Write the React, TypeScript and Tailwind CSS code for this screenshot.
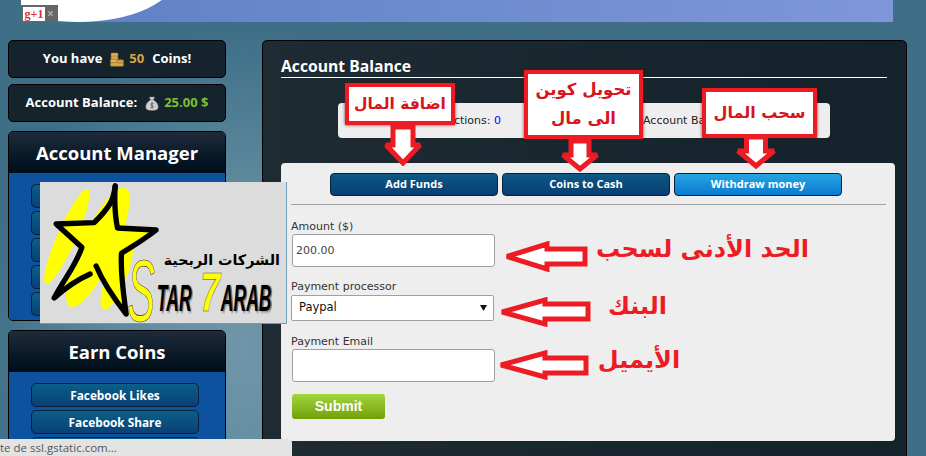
import React from "react";

const AR = { fontFamily: '"DejaVu Sans", sans-serif' };

function CoinStack() {
  return (
    <svg width="14" height="15" viewBox="0 0 14 15" className="ml-[8px] mr-[5px]">
      <rect x="1" y="1" width="7" height="3.5" rx="1" fill="#e0b25a" stroke="#9c7428" strokeWidth="0.6" />
      <rect x="1" y="4" width="7" height="3.5" rx="1" fill="#d9a94e" stroke="#9c7428" strokeWidth="0.6" />
      <rect x="0.5" y="7.2" width="7" height="3.5" rx="1" fill="#e0b25a" stroke="#9c7428" strokeWidth="0.6" />
      <rect x="0.5" y="10.6" width="13" height="3.6" rx="1" fill="#d9a94e" stroke="#9c7428" strokeWidth="0.6" />
      <rect x="7" y="7.8" width="6.5" height="3.2" rx="1" fill="#cf9c42" stroke="#9c7428" strokeWidth="0.6" />
    </svg>
  );
}

function MoneyBag() {
  return (
    <svg width="14" height="15" viewBox="0 0 14 15" className="ml-[8px] mr-[5px]">
      <path d="M4.5 1 L9.5 1 L8.5 4 L5.5 4 Z" fill="#d8d8d8" stroke="#777" strokeWidth="0.5" />
      <path d="M5.5 4 C2 6 0.5 9 0.8 11.5 C1 13.8 3 14.5 7 14.5 C11 14.5 13 13.8 13.2 11.5 C13.5 9 12 6 8.5 4 Z" fill="#cfcfcf" stroke="#777" strokeWidth="0.5" />
      <path d="M8.6 7.6 C7.6 6.9 5.6 7.1 5.7 8.4 C5.8 9.7 8.5 9.3 8.5 10.7 C8.5 11.8 6.4 11.9 5.4 11.2 M7 6.3 L7 12.6" fill="none" stroke="#555" strokeWidth="0.8" />
    </svg>
  );
}

function SideBtn({ label }: { label?: string }) {
  return (
    <div className="h-[24px] w-[168px] shrink-0 rounded-[5px] border border-[#08203a] bg-gradient-to-b from-[#0b5f88] to-[#0a4076] flex items-center justify-center text-white font-bold text-[11.8px] pt-[1px]">
      {label}
    </div>
  );
}

function Panel({ title, height, children }: { title: string; height: string; children: React.ReactNode }) {
  return (
    <div className={`${height} rounded-[5px] border border-black overflow-hidden flex flex-col`}>
      <div className="h-[41px] shrink-0 bg-gradient-to-b from-[#1f2b3b] to-[#000d1a] flex items-center justify-center text-white font-bold text-[18.5px]">
        {title}
      </div>
      <div className="flex-1 bg-[#0c529f] flex flex-col items-center gap-[3px] pt-[11px] pr-[4px]">{children}</div>
    </div>
  );
}

function TabBtn({ label, active }: { label: string; active?: boolean }) {
  return (
    <div className={`h-[23px] w-[168px] rounded-[4px] border border-[#0a2038] flex items-center justify-center text-white font-bold text-[11px] bg-gradient-to-b ${active ? "from-[#27a5e2] to-[#0a7ad2]" : "from-[#0b5a86] to-[#0a3d72]"}`}>
      {label}
    </div>
  );
}

function DownArrow({ x, y, w, h, shaft, neck }: { x: number; y: number; w: number; h: number; shaft: number; neck: number }) {
  const l = (w - shaft) / 2;
  const r = l + shaft;
  return (
    <svg className="absolute" style={{ left: x, top: y }} width={w} height={h}>
      <polygon
        points={`${l},2 ${r},2 ${r},${neck} ${w - 2},${neck} ${w / 2},${h - 3} 2,${neck} ${l},${neck}`}
        fill="#ffffff"
        stroke="#ed1c24"
        strokeWidth="5"
        strokeLinejoin="miter"
        strokeMiterlimit="2"
      />
    </svg>
  );
}

function LeftArrow({ x, y, w, h, head, top, bottom }: { x: number; y: number; w: number; h: number; head: number; top: number; bottom: number }) {
  const m = h / 2;
  return (
    <svg className="absolute" style={{ left: x, top: y }} width={w} height={h}>
      <polygon
        points={`5,${m} ${head},3 ${head},${top} ${w - 3},${top} ${w - 3},${bottom} ${head},${bottom} ${head},${h - 3}`}
        fill="#ffffff"
        stroke="#ed1c24"
        strokeWidth="5"
        strokeLinejoin="miter"
        strokeMiterlimit="3"
      />
    </svg>
  );
}

function Note({ x, y, w, h, size, children }: { x: number; y: number; w: number; h: number; size: number; children: React.ReactNode }) {
  return (
    <div
      dir="rtl"
      className="absolute bg-white border-[4px] border-[#ed1c24] shadow-[0_0_3px_rgba(90,20,20,0.8)] flex items-center justify-center text-center font-bold text-[#d8141c] leading-[1.7]"
      style={{ left: x, top: y, width: w, height: h, fontSize: size, ...AR }}
    >
      <div>{children}</div>
    </div>
  );
}

function Logo() {
  return (
    <div className="absolute left-[40px] top-[182px] w-[247px] h-[142px] bg-[#dcdcdc] border-r border-b border-[#6f9db5]">
      <svg width="247" height="142" viewBox="120 36 740 426">
        <defs>
          <filter id="sh" x="-10%" y="-10%" width="125%" height="125%">
            <feGaussianBlur stdDeviation="4" />
          </filter>
        </defs>
        <g fill="#ffff00">
          <ellipse cx="200" cy="200" rx="28" ry="155" transform="rotate(24 200 200)" />
          <ellipse cx="293" cy="232" rx="52" ry="196" transform="rotate(25 293 232)" />
          <ellipse cx="350" cy="315" rx="30" ry="112" transform="rotate(21 350 315)" />
        </g>
        <polygon points="345,50 352,172 465,180 362,250 378,430 288,288 165,382 245,235 168,162 282,158" fill="#ffff00" />
        <g fill="none" stroke="#000" strokeLinecap="round" strokeLinejoin="round">
          <path d="M345 48 C340 90 330 110 282 158 L168 162 L245 232 C228 285 190 330 162 384 C200 350 240 325 270 312" strokeWidth="16" />
          <path d="M345 48 C342 100 345 140 352 174 L468 180 C430 210 395 230 364 250 C360 310 370 370 378 432 C345 390 310 340 288 288" strokeWidth="16" />
        </g>
        <g style={{ fontFamily: '"Liberation Sans", sans-serif' }} fontWeight="700" fontStyle="italic">
          <text transform="translate(474 426) scale(0.47 1)" fontSize="112" fill="#777" filter="url(#sh)">TAR</text>
          <text transform="translate(470 422) scale(0.47 1)" fontSize="112" fill="#000">TAR</text>
          <text transform="translate(666 426) scale(0.47 1)" fontSize="112" fill="#777" filter="url(#sh)">ARAB</text>
          <text transform="translate(662 422) scale(0.47 1)" fontSize="112" fill="#000">ARAB</text>
          <text transform="translate(600 422) scale(0.95 1.5)" fontSize="112" fill="#ffff00" stroke="#444" strokeWidth="1">7</text>
          <text transform="translate(382 452) scale(1.1 2.35)" fontSize="112" fontWeight="400" fill="#ffff00" stroke="#333" strokeWidth="0.8">S</text>
        </g>
        <text x="665" y="284" textAnchor="middle" direction="rtl" fontSize="43" fontWeight="700" fill="#000" style={AR}>الشركات الربحية</text>
      </svg>
    </div>
  );
}

export default function App() {
  return (
    <div
      className="relative w-[926px] h-[456px] overflow-hidden bg-[#3e6f87] bg-[radial-gradient(ellipse_260px_320px_at_244px_350px,#6f96a8_0%,#5f8a9e_50%,#3e6f87_100%)]"
      style={{ fontFamily: '"Open Sans", sans-serif' }}
    >
      {/* top banner */}
      <div className="relative ml-[21px] w-[872px] h-[22px] overflow-hidden bg-gradient-to-r from-[#5e7fc6] to-[#7f97d8]">
        <div className="absolute -left-[40px] -top-[70px] w-[195px] h-[92px] rounded-[50%] bg-white" />
        <div className="absolute left-0 top-[5px] h-[17px] w-[37px] bg-[#666] flex items-center pl-[2px] gap-[2px]">
          <div className="h-[14px] w-[22px] bg-white flex items-center justify-center text-[#d8352a] font-bold text-[12px] leading-none" style={{ fontFamily: '"Liberation Serif", serif' }}>
            g+1
          </div>
          <span className="text-[#aaa] text-[12px] font-bold leading-none">×</span>
        </div>
      </div>

      <div className="flex pl-[8px] pt-[18px] items-start">
        {/* sidebar */}
        <div className="w-[218px] shrink-0 flex flex-col">
          <div className="h-[38px] rounded-[5px] border border-black bg-[#15232c] flex items-center justify-center text-white font-bold text-[13px]">
            You have
            <CoinStack />
            <span className="text-[#d9a441]">50</span>
            <span className="ml-[8px]">Coins!</span>
          </div>
          <div className="mt-[6px] h-[38px] rounded-[5px] border border-black bg-[#15232c] flex items-center justify-center text-white font-bold text-[13px]">
            Account Balance:
            <MoneyBag />
            <span className="text-[#7cc02c]">25.00 $</span>
          </div>
          <div className="mt-[9px]">
            <Panel title="Account Manager" height="h-[190px]">
              <SideBtn />
              <SideBtn />
              <SideBtn />
              <SideBtn />
              <SideBtn />
            </Panel>
          </div>
          <div className="mt-[9px]">
            <Panel title="Earn Coins" height="h-[130px]">
              <SideBtn label="Facebook Likes" />
              <SideBtn label="Facebook Share" />
              <SideBtn />
            </Panel>
          </div>
        </div>

        {/* main */}
        <div className="ml-[36px] w-[645px] h-[440px] shrink-0 rounded-[5px] border border-black bg-gradient-to-r from-[#1e2b33] to-[#13222b] pl-[18px] pr-[11px] pt-[14px]">
          <div className="w-[606px] h-[23px] border-b border-white text-white font-bold text-[15.7px] leading-[23px]">
            Account Balance
          </div>
          <div className="ml-[57px] mt-[25px] w-[492px] h-[35px] pt-[1px] rounded-[4px] bg-[#eeeeee] flex items-center text-[11px] text-[#222]" style={{ fontFamily: '"DejaVu Sans", sans-serif' }}>
            <span className="w-[163px] text-right whitespace-nowrap">
              Total Transactions: <span className="text-[#0000ff]">0</span>
            </span>
            <span className="ml-[142px] whitespace-nowrap">Account Balance</span>
          </div>
          <div className="mt-[25px] w-[614px] h-[278px] rounded-[4px] bg-[#eeeeee] px-[10px] pt-[10px]">
            <div className="flex justify-center gap-[4px] pr-[4px]">
              <TabBtn label="Add Funds" />
              <TabBtn label="Coins to Cash" />
              <TabBtn label="Withdraw money" active />
            </div>
            <div className="mt-[8px] w-[595px] border-t border-[#a0a0a0]" />
            <div className="text-[#333] text-[11px]" style={{ fontFamily: '"DejaVu Sans", sans-serif' }}>
              <div className="mt-[15px] h-[14px] leading-[14px]">Amount ($)</div>
              <input readOnly value="200.00" className="ml-[1px] block w-[203px] h-[33px] rounded-[3px] border border-[#a0a0a0] bg-white px-[3px] text-[11px] text-[#444] outline-none" />
              <div className="mt-[13px] h-[14px] leading-[14px]">Payment processor</div>
              <div className="relative mt-[1px] w-[203px] h-[26px]">
                <select className="block w-full h-full appearance-none rounded-[2px] border border-[#a0a0a0] bg-white pl-[7px] text-[11.5px] text-[#111] outline-none">
                  <option>Paypal</option>
                </select>
                <svg className="absolute right-[7px] top-[10px]" width="7" height="6" viewBox="0 0 7 6">
                  <polygon points="0,0 7,0 3.5,6" fill="#111" />
                </svg>
              </div>
              <div className="mt-[14px] h-[14px] leading-[14px]">Payment Email</div>
              <input readOnly className="ml-[1px] block w-[203px] h-[33px] rounded-[3px] border border-[#a0a0a0] bg-white outline-none" />
            </div>
            <div className="ml-[1px] mt-[12px] w-[93px] h-[25px] rounded-[3px] bg-gradient-to-b from-[#a3d63c] to-[#72a000] flex items-center justify-center text-white font-bold text-[14px]" style={{ fontFamily: '"Liberation Sans", sans-serif' }}>
              Submit
            </div>
          </div>
        </div>
      </div>

      {/* annotations over the page */}
      <Note x={345} y={83} w={110} h={42} size={15.5}>اضافة المال</Note>
      <Note x={524} y={70} w={119} h={69} size={16.5}>
        تحويل كوين
        <br />
        الى مال
      </Note>
      <Note x={702} y={88} w={115} h={50} size={16}>سحب المال</Note>
      <DownArrow x={384} y={125} w={38} h={41} shaft={20} neck={20} />
      <DownArrow x={561} y={139} w={38} h={33} shaft={18} neck={16} />
      <DownArrow x={736} y={135} w={40} h={34} shaft={19} neck={16} />
      <LeftArrow x={502} y={241} w={86} h={31} head={45} top={8} bottom={23} />
      <LeftArrow x={497} y={297} w={94} h={30} head={48} top={7} bottom={22} />
      <LeftArrow x={496} y={350} w={93} h={30} head={49} top={8} bottom={23} />
      <div dir="rtl" className="absolute left-[590px] top-[232px] w-[225px] text-center text-[#ed1c24] font-bold text-[24px] leading-[34px]" style={AR}>الحد الأدنى لسحب</div>
      <div dir="rtl" className="absolute left-[600px] top-[289px] w-[75px] text-center text-[#ed1c24] font-bold text-[24px] leading-[34px]" style={AR}>البنك</div>
      <div dir="rtl" className="absolute left-[590px] top-[343px] w-[98px] text-center text-[#ed1c24] font-bold text-[24px] leading-[34px]" style={AR}>الأيميل</div>

      <Logo />

      {/* browser status bar */}
      <div className="absolute left-0 bottom-0 w-[292px] h-[17px] rounded-tr-[4px] bg-[#e3e3e3] text-[#555] text-[11.5px] leading-[17px] whitespace-nowrap" style={{ fontFamily: '"Open Sans", sans-serif' }}>
        te de ssl.gstatic.com...
      </div>
    </div>
  );
}
